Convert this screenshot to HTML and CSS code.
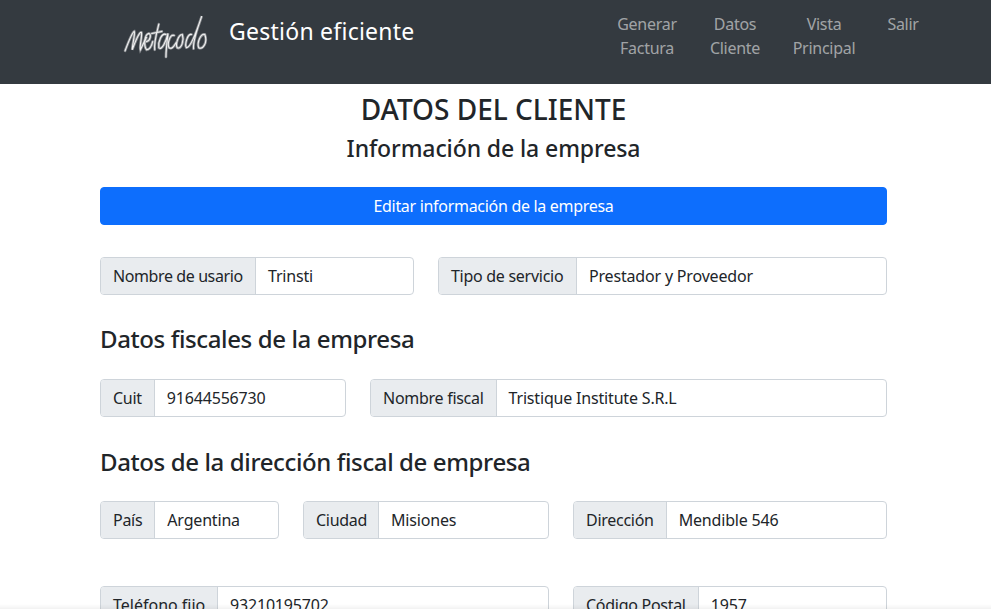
FILE: index.html
```html
<!DOCTYPE html>
<html lang="es">
<head>
    <meta charset="UTF-8">
    <title>Datos del cliente</title>
    <link rel="stylesheet" href="styles.css">
</head>
<body>
<nav class="navbar">
    <svg class="logo" width="88" height="45" viewBox="0 0 86 44">
        <g fill="none" stroke="#8d9094" stroke-width="2.6" stroke-linecap="round">
            <path d="M2 36 C5 28 9 18 11 17 C12 20 9 30 9 35 C12 27 16 17 18 18 C19 22 16 30 17 35 C19 31 21 26 23 23"/>
            <path d="M23 27 C27 26 28 19 25 19 C21 20 20 31 23 35 C26 35 28 31 29 27"/>
            <path d="M35 10 C33 18 30 28 31 35 M28 19 L38 17"/>
            <path d="M42 20 C38 18 34 27 35 33 C38 36 42 27 44 19 C43 27 42 35 42 42"/>
            <path d="M50 21 C46 19 43 29 45 33 C48 35 50 31 52 28"/>
            <path d="M58 20 C54 20 51 30 53 33 C57 35 60 26 58 20"/>
            <path d="M67 20 C63 19 60 30 62 33 C66 33 71 20 77 2 C73 14 68 26 69 34"/>
            <path d="M80 20 C76 19 72 28 74 33 C78 35 83 28 80 20"/>
        </g>
        <g fill="none" stroke="#f4f4f4" stroke-width="1" stroke-linecap="round">
            <path d="M2 36 C5 28 9 18 11 17 C12 20 9 30 9 35 C12 27 16 17 18 18 C19 22 16 30 17 35 C19 31 21 26 23 23"/>
            <path d="M23 27 C27 26 28 19 25 19 C21 20 20 31 23 35 C26 35 28 31 29 27"/>
            <path d="M35 10 C33 18 30 28 31 35 M28 19 L38 17"/>
            <path d="M42 20 C38 18 34 27 35 33 C38 36 42 27 44 19 C43 27 42 35 42 42"/>
            <path d="M50 21 C46 19 43 29 45 33 C48 35 50 31 52 28"/>
            <path d="M58 20 C54 20 51 30 53 33 C57 35 60 26 58 20"/>
            <path d="M67 20 C63 19 60 30 62 33 C66 33 71 20 77 2 C73 14 68 26 69 34"/>
            <path d="M80 20 C76 19 72 28 74 33 C78 35 83 28 80 20"/>
        </g>
    </svg>
    <a class="brand" href="#">Gestión eficiente</a>
    <ul class="nav-links">
        <li class="link-generar"><a href="#">Generar Factura</a></li>
        <li class="link-datos"><a href="#">Datos Cliente</a></li>
        <li class="link-vista"><a href="#">Vista Principal</a></li>
        <li class="link-salir"><a href="#">Salir</a></li>
    </ul>
</nav>
<main class="container">
    <h2 class="title">DATOS DEL CLIENTE</h2>
    <h4 class="subtitle">Información de la empresa</h4>
    <button class="btn-edit" type="button">Editar información de la empresa</button>

    <div class="row row-usuario">
        <div class="input-group"><span class="group-text">Nombre de usario</span><span class="group-value">Trinsti</span></div>
        <div class="input-group"><span class="group-text">Tipo de servicio</span><span class="group-value">Prestador y Proveedor</span></div>
    </div>

    <h4 class="section">Datos fiscales de la empresa</h4>
    <div class="row row-fiscal">
        <div class="input-group"><span class="group-text">Cuit</span><span class="group-value">91644556730</span></div>
        <div class="input-group"><span class="group-text">Nombre fiscal</span><span class="group-value">Tristique Institute S.R.L</span></div>
    </div>

    <h4 class="section">Datos de la dirección fiscal de empresa</h4>
    <div class="row row-direccion">
        <div class="input-group"><span class="group-text">País</span><span class="group-value">Argentina</span></div>
        <div class="input-group"><span class="group-text">Ciudad</span><span class="group-value">Misiones</span></div>
        <div class="input-group"><span class="group-text">Dirección</span><span class="group-value">Mendible 546</span></div>
    </div>
    <div class="row row-telefono">
        <div class="input-group"><span class="group-text">Teléfono fijo</span><span class="group-value">93210195702</span></div>
        <div class="input-group"><span class="group-text">Código Postal</span><span class="group-value">1957</span></div>
    </div>
</main>
<div class="page-shadow"></div>
</body>
</html>
```
FILE: styles.css
```css
*{
    box-sizing: border-box;
}
html,body{
    height: 609px;
    overflow: hidden;
}
body{
    margin: 0;
    font-family: "Noto Sans", "Open Sans", sans-serif;
    font-size: 16px;
    letter-spacing: -.28px;
    color: #212529;
    background: #fff;
}
a{
    text-decoration: none;
}
.navbar{
    display: flex;
    height: 84px;
    padding-left: 123px;
    background: #343a40;
}
.logo{
    margin-top: 14px;
}
.brand{
    margin: 15px 0 0 18px;
    font-size: 23px;
    line-height: 32px;
    letter-spacing: .25px;
    color: #fff;
}
.nav-links{
    display: flex;
    list-style: none;
    margin: 12px 0 0 auto;
    padding: 0 72px 0 0;
    line-height: 24px;
    text-align: center;
}
.nav-links a{
    color: rgba(255,255,255,.55);
}
.link-generar{ width: 70px; }
.link-datos{ width: 52px; margin-left: 27px; }
.link-vista{ width: 64px; margin-left: 31px; }
.link-salir{ width: 32px; margin-left: 31px; }
.container{
    padding: 9px 104px 0 100px;
}
.title{
    margin: 0;
    font-size: 28px;
    line-height: 32px;
    font-weight: 500;
    letter-spacing: 0;
    text-align: center;
}
.subtitle{
    margin: 9px 0 0;
    font-size: 23px;
    line-height: 29px;
    font-weight: 500;
    letter-spacing: -.1px;
    text-align: center;
}
.btn-edit{
    display: block;
    width: 100%;
    height: 38px;
    margin-top: 24px;
    border: 1px solid #0d6efd;
    border-radius: 4px;
    background: #0d6efd;
    color: #fff;
    font: inherit;
    letter-spacing: -.3px;
}
.row{
    display: flex;
    gap: 24px;
}
.row-usuario{ margin-top: 32px; }
.row-fiscal{ margin-top: 26px; }
.row-direccion{ margin-top: 25px; }
.row-telefono{ margin-top: 47px; }
.section{
    margin: 29px 0 0;
    font-size: 24px;
    line-height: 29px;
    font-weight: 500;
    letter-spacing: -.38px;
}
.row-fiscal + .section{ margin-top: 30px; }
.input-group{
    display: flex;
    height: 38px;
    border: 1px solid #ced4da;
    border-radius: 4px;
    line-height: 36px;
    overflow: hidden;
}
.group-text{
    padding: 0 12px;
    background: #e9ecef;
    border-right: 1px solid #ced4da;
    white-space: nowrap;
}
.group-value{
    flex: 1;
    padding: 0 12px;
    letter-spacing: -.18px;
    white-space: nowrap;
}
.row-usuario .input-group:nth-child(1){ width: 314px; }
.row-usuario .input-group:nth-child(1) .group-text{ width: 155px; letter-spacing: -.4px; }
.row-usuario .input-group:nth-child(2){ flex: 1; }
.row-usuario .input-group:nth-child(2) .group-text{ width: 138px; }
.row-fiscal .input-group:nth-child(1){ width: 246px; }
.row-fiscal .input-group:nth-child(2){ flex: 1; }
.row-direccion .input-group:nth-child(1){ width: 179px; }
.row-direccion .input-group:nth-child(2){ width: 246px; }
.row-direccion .input-group:nth-child(2) .group-text{ width: 75px; }
.row-direccion .input-group:nth-child(3){ flex: 1; }
.row-telefono .input-group:nth-child(1){ width: 449px; }
.row-telefono .input-group:nth-child(1) .group-text{ width: 117px; letter-spacing: 0; }
.row-telefono .input-group:nth-child(2){ flex: 1; }
.page-shadow{
    position: fixed;
    left: 0;
    right: 0;
    bottom: 0;
    height: 5px;
    background: linear-gradient(rgba(0,0,0,0), rgba(0,0,0,.05));
}
```
